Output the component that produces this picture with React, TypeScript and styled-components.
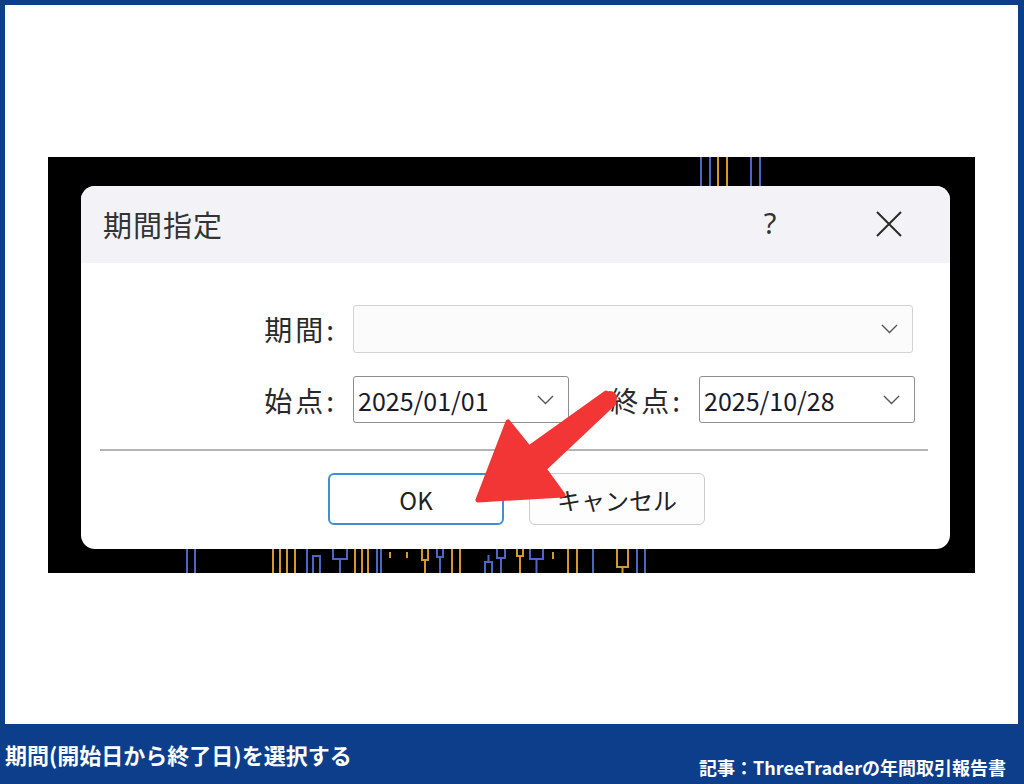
import React from "react";
import styled, { createGlobalStyle } from "styled-components";

const GlobalStyle = createGlobalStyle`
  html, body {
    margin: 0;
    padding: 0;
    background: #0c3e8c;
  }
  body {
    font-family: "Noto Sans CJK JP", "Noto Sans", sans-serif;
  }
`;

const colors = {
  navy: "#0c3e8c",
  orange: "#d8972b",
  blue: "#4c66c6",
  red: "#f23636",
  ink: "#1f1f1f",
};

type Candle = {
  x: number;
  w: number;
  c: "o" | "b";
  top: number;
  bot: number;
  wick?: number;
};

// candles peeking out around the dialog, in black box coordinates
const candles: Candle[] = [
  { x: 653, w: 9, c: "b", top: -10, bot: 40 },
  { x: 670, w: 9, c: "o", top: -10, bot: 40 },
  { x: 703, w: 9, c: "b", top: -10, bot: 40 },
  { x: 139, w: 8, c: "b", top: 380, bot: 430 },
  { x: 225, w: 7, c: "o", top: 380, bot: 430 },
  { x: 239, w: 8, c: "o", top: 380, bot: 430 },
  { x: 259, w: 0, c: "b", top: 380, bot: 430 },
  { x: 265, w: 7, c: "b", top: 399, bot: 430 },
  { x: 285, w: 14, c: "b", top: 380, bot: 402, wick: 416 },
  { x: 307, w: 7, c: "o", top: 380, bot: 430 },
  { x: 320, w: 0, c: "o", top: 380, bot: 430 },
  { x: 329, w: 4, c: "b", top: 380, bot: 430 },
  { x: 342, w: 0, c: "o", top: 395, bot: 401 },
  { x: 359, w: 0, c: "o", top: 395, bot: 401 },
  { x: 374, w: 6, c: "o", top: 380, bot: 403, wick: 416 },
  { x: 389, w: 6, c: "b", top: 380, bot: 400, wick: 416 },
  { x: 404, w: 8, c: "o", top: 380, bot: 430 },
  { x: 437, w: 7, c: "b", top: 405, bot: 430, wick: 398 },
  { x: 449, w: 8, c: "b", top: 380, bot: 401, wick: 416 },
  { x: 469, w: 6, c: "o", top: 380, bot: 399, wick: 416 },
  { x: 482, w: 13, c: "b", top: 380, bot: 402, wick: 416 },
  { x: 505, w: 0, c: "o", top: 395, bot: 402 },
  { x: 520, w: 9, c: "o", top: 380, bot: 430 },
  { x: 545, w: 0, c: "b", top: 380, bot: 430 },
  { x: 569, w: 11, c: "o", top: 380, bot: 410, wick: 416 },
  { x: 589, w: 8, c: "b", top: 380, bot: 430 },
];

const ChartBackdrop = () => (
  <ChartSvg width="927" height="416" viewBox="0 0 927 416">
    {candles.map((k, i) => {
      const stroke = k.c === "o" ? colors.orange : colors.blue;
      const mid = k.x + k.w / 2;
      return (
        <g key={i} stroke={stroke} strokeWidth="2" fill="none">
          {k.w === 0 ? (
            <line x1={k.x} y1={k.top} x2={k.x} y2={k.bot} />
          ) : (
            <rect x={k.x} y={k.top} width={k.w} height={k.bot - k.top} />
          )}
          {k.wick !== undefined && (
            <line
              x1={mid}
              y1={k.wick > k.bot ? k.bot : k.top}
              x2={mid}
              y2={k.wick}
            />
          )}
        </g>
      );
    })}
  </ChartSvg>
);

const Chevron = () => (
  <svg width="17" height="10" viewBox="0 0 17 10">
    <polyline points="1,1 8.5,8.5 16,1" fill="none" stroke="#555" strokeWidth="1.4" />
  </svg>
);

const CloseIcon = () => (
  <svg width="28" height="28" viewBox="0 0 28 28">
    <path d="M2 2 L26 26 M26 2 L2 26" stroke="#2a2a2a" strokeWidth="2" />
  </svg>
);

const Arrow = () => (
  <ArrowSvg viewBox="0 0 869 363" width="869" height="363">
    <polygon
      points="525,207 448,262 427,236 397,314 482,309 463,283 533,217"
      fill={colors.red}
      stroke={colors.red}
      strokeWidth="5"
      strokeLinejoin="round"
    />
    <circle cx="529" cy="212" r="7" fill={colors.red} />
  </ArrowSvg>
);

const App = () => {
  return (
    <>
      <GlobalStyle />
      <Frame>
        <Canvas>
          <BlackBox>
            <ChartBackdrop />
            <Dialog>
              <TitleBar>
                <Title>期間指定</Title>
                <HelpButton>?</HelpButton>
                <CloseButton>
                  <CloseIcon />
                </CloseButton>
              </TitleBar>
              <Body>
                <Row>
                  <Label>期間:</Label>
                  <Field width={560} soft>
                    <FieldText></FieldText>
                    <Chevron />
                  </Field>
                </Row>
                <Row gap={23}>
                  <Label>始点:</Label>
                  <Field width={216}>
                    <FieldText>2025/01/01</FieldText>
                    <Chevron />
                  </Field>
                  <Label indent={14}>終点:</Label>
                  <Field width={216}>
                    <FieldText>2025/10/28</FieldText>
                    <Chevron />
                  </Field>
                </Row>
              </Body>
              <Separator />
              <Buttons>
                <Button primary>OK</Button>
                <Button>キャンセル</Button>
              </Buttons>
              <Arrow />
            </Dialog>
          </BlackBox>
        </Canvas>
        <Caption>
          <CaptionTitle>期間(開始日から終了日)を選択する</CaptionTitle>
          <CaptionSource>記事：ThreeTraderの年間取引報告書</CaptionSource>
        </Caption>
      </Frame>
    </>
  );
};

export default App;

const Frame = styled.div`
  width: 1024px;
  height: 784px;
  display: flex;
  flex-direction: column;
  background: ${colors.navy};
  box-sizing: border-box;
  padding: 5px 6px 0 5px;
  overflow: hidden;
`;

const Canvas = styled.div`
  height: 719px;
  flex-shrink: 0;
  background: #ffffff;
  box-sizing: border-box;
  padding: 152px 0 0 43px;
`;

const BlackBox = styled.div`
  position: relative;
  width: 927px;
  height: 416px;
  background: #000000;
  box-sizing: border-box;
  padding: 29px 0 0 33px;
`;

const ChartSvg = styled.svg`
  position: absolute;
  left: 0;
  top: 0;
`;

const Dialog = styled.div`
  position: relative;
  z-index: 1;
  width: 869px;
  height: 363px;
  background: #ffffff;
  border-radius: 14px;
  overflow: hidden;
  display: flex;
  flex-direction: column;
  color: ${colors.ink};
`;

const TitleBar = styled.div`
  height: 77px;
  flex-shrink: 0;
  background: #f3f3f7;
  display: flex;
  align-items: center;
  padding-left: 22px;
`;

const Title = styled.div`
  flex: 1;
  font-size: 29px;
  color: #333333;
  letter-spacing: 1px;
  padding-bottom: 2px;
`;

const HelpButton = styled.div`
  width: 62px;
  margin-right: 57px;
  text-align: center;
  font-family: "Noto Sans", sans-serif;
  font-size: 29px;
  color: #333333;
  padding-bottom: 4px;
`;

const CloseButton = styled.div`
  width: 62px;
  margin-right: 30px;
  display: flex;
  justify-content: center;
  padding-bottom: 2px;
`;

const Body = styled.div`
  padding-top: 42px;
  display: flex;
  flex-direction: column;
`;

const Row = styled.div<{ gap?: number }>`
  display: flex;
  align-items: center;
  padding-left: 156px;
  margin-top: ${(p) => p.gap ?? 0}px;
`;

const Label = styled.div<{ indent?: number }>`
  width: 100px;
  margin-left: ${(p) => p.indent ?? 0}px;
  margin-right: 16px;
  text-align: right;
  font-size: 28px;
  letter-spacing: 3px;
  color: #2a2a2a;
`;

const Field = styled.div<{ width: number; soft?: boolean }>`
  width: ${(p) => p.width}px;
  height: ${(p) => (p.soft ? 48 : 47)}px;
  box-sizing: border-box;
  border: 1px solid ${(p) => (p.soft ? "#d2d2d2" : "#8e8e8e")};
  border-radius: 3px;
  background: ${(p) => (p.soft ? "#fbfbfb" : "#ffffff")};
  display: flex;
  align-items: center;
  padding: 0 14px 0 4px;
`;

const FieldText = styled.span`
  flex: 1;
  font-size: 25px;
  color: #1a1a2a;
`;

const Separator = styled.div`
  height: 2px;
  margin: 26px 22px 0 19px;
  background: #b4b4b4;
`;

const Buttons = styled.div`
  display: flex;
  justify-content: center;
  gap: 25px;
  margin-top: 22px;
  padding-left: 2px;
`;

const Button = styled.div<{ primary?: boolean }>`
  width: 176px;
  height: 52px;
  box-sizing: border-box;
  border: ${(p) => (p.primary ? "2px solid #3f8fd2" : "1px solid #cccccc")};
  border-radius: 6px;
  background: ${(p) => (p.primary ? "#ffffff" : "#fdfdfd")};
  display: flex;
  align-items: center;
  justify-content: center;
  font-size: 24px;
  color: #222222;
`;

const ArrowSvg = styled.svg`
  position: absolute;
  left: 0;
  top: 0;
  pointer-events: none;
`;

const Caption = styled.div`
  flex: 1;
  display: flex;
  justify-content: space-between;
  align-items: flex-start;
  padding: 0 12px 0 0;
  color: #ffffff;
  font-weight: 700;
`;

const CaptionTitle = styled.div`
  font-size: 22px;
  margin-top: 14px;
`;

const CaptionSource = styled.div`
  font-size: 18px;
  margin-top: 30px;
`;
